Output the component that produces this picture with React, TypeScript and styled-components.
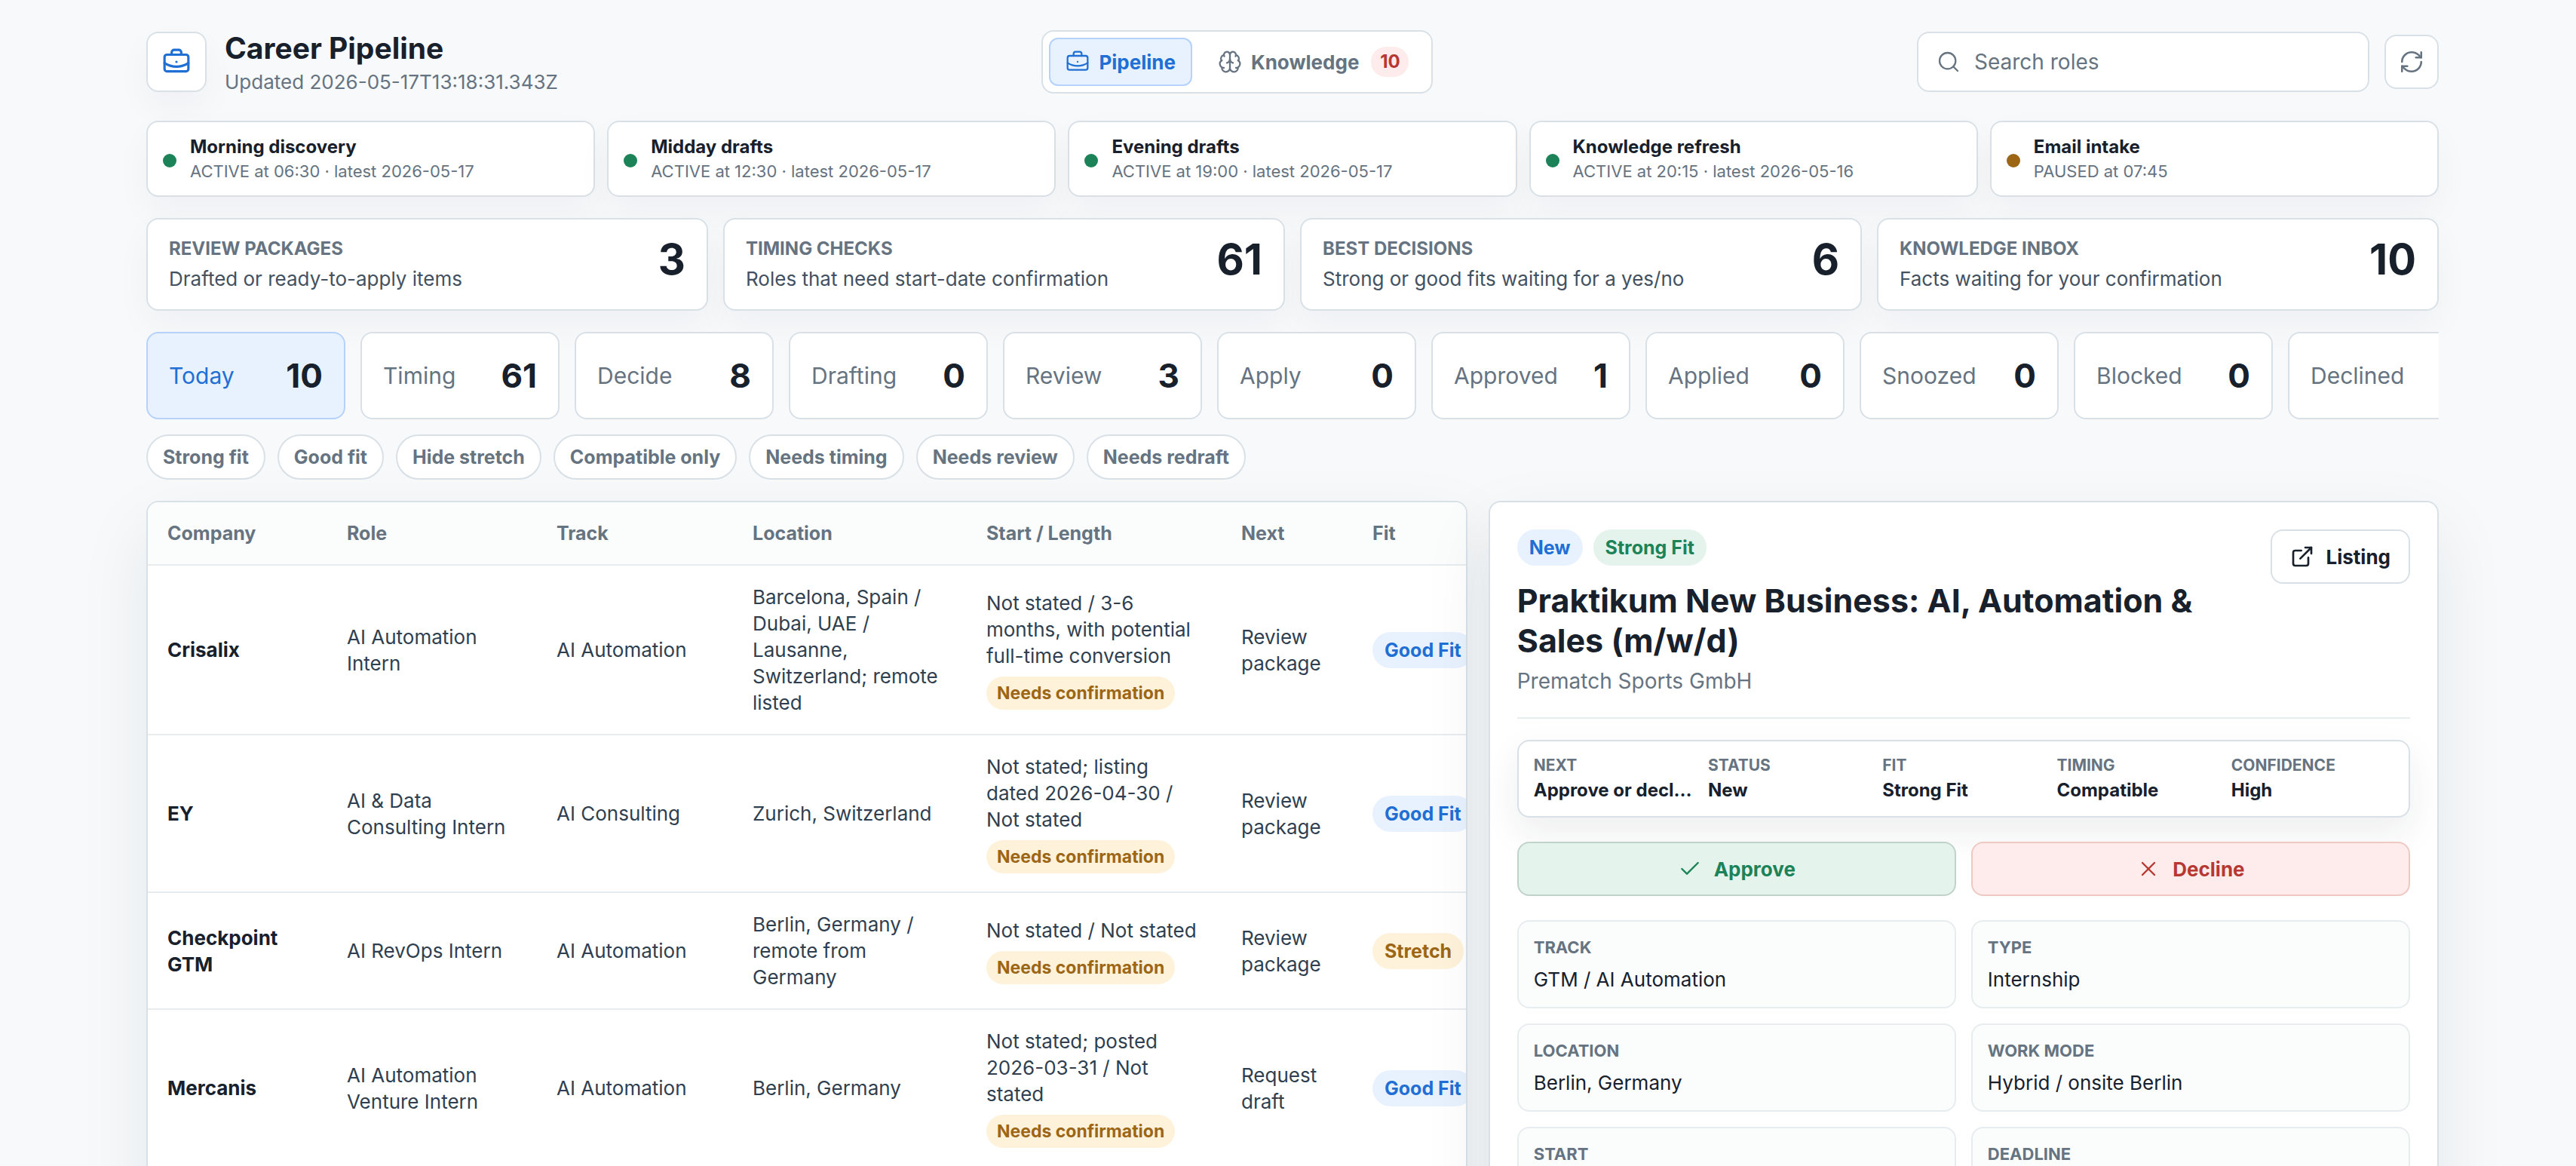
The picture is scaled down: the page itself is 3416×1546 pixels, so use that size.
import React from "react";
import styled, { createGlobalStyle, css } from "styled-components";
import {
  BriefcaseBusiness,
  Brain,
  Search,
  RefreshCw,
  ExternalLink,
  Check,
  X,
} from "lucide-react";

const color = {
  page: "#f7f9fb",
  panel: "#ffffff",
  soft: "#fbfdfd",
  line: "#d9e1e7",
  lineSoft: "#e7ecef",
  ink: "#17202b",
  body: "#2f3f4f",
  text: "#435160",
  muted: "#667380",
  blue: "#1f6fd4",
  blueBg: "#e8f2ff",
  blueLine: "#b5d2fa",
  green: "#1c8358",
  greenBg: "#e4f3eb",
  amber: "#9c6615",
  amberBg: "#fff2db",
  red: "#b73832",
  redBg: "#fdeceb",
};

const cardShadow = "0 20px 48px rgba(23, 32, 43, 0.04)";
const panelShadow = "0 36px 96px rgba(23, 32, 43, 0.08)";

type Tone = "blue" | "green" | "amber" | "red";

const tones: Record<Tone, ReturnType<typeof css>> = {
  blue: css`
    color: ${color.blue};
    background: ${color.blueBg};
  `,
  green: css`
    color: ${color.green};
    background: ${color.greenBg};
  `,
  amber: css`
    color: ${color.amber};
    background: ${color.amberBg};
  `,
  red: css`
    color: ${color.red};
    background: ${color.redBg};
  `,
};

const GlobalStyle = createGlobalStyle`
  *, *::before, *::after { box-sizing: border-box; }
  html, body { height: 100%; }
  #root { height: 100%; }
  body {
    margin: 0;
    overflow: hidden;
    background: ${color.page};
    color: ${color.ink};
    font-family: Inter, "Open Sans", sans-serif;
    font-size: 28px;
    -webkit-font-smoothing: antialiased;
  }
  h1, h2, p, dl, dd, dt { margin: 0; }
  button, input { font: inherit; color: inherit; }
  button { cursor: pointer; }
  svg { flex: none; display: block; }
`;

const Page = styled.div`
  height: 100%;
  overflow: hidden;
  padding: 40px 0 0 12px;
`;

const Shell = styled.div`
  max-width: 3040px;
  margin: 0 auto;
  display: flex;
  flex-direction: column;
  gap: 28px;
`;

const Header = styled.header`
  display: flex;
  align-items: center;
  justify-content: space-between;
  height: 84px;
  margin-bottom: 8px;
`;

const Brand = styled.div`
  display: flex;
  align-items: center;
  gap: 24px;
`;

const BrandMark = styled.div`
  display: grid;
  place-items: center;
  width: 80px;
  height: 80px;
  border: 2px solid ${color.line};
  border-radius: 16px;
  background: ${color.panel};
  color: ${color.blue};
  box-shadow: ${cardShadow};
`;

const BrandText = styled.div`
  padding-top: 4px;
`;

const BrandTitle = styled.h1`
  font-size: 39px;
  line-height: 46px;
  font-weight: 700;
`;

const BrandNote = styled.p`
  margin-top: 4px;
  font-size: 26px;
  line-height: 36px;
  color: ${color.muted};
`;

const Nav = styled.nav`
  display: flex;
  gap: 12px;
  padding: 8px;
  border: 2px solid ${color.line};
  border-radius: 16px;
  background: ${color.panel};
`;

const NavButton = styled.button<{ $active?: boolean }>`
  display: flex;
  align-items: center;
  gap: 12px;
  height: 64px;
  padding: 0 20px;
  border: 2px solid ${(p) => (p.$active ? color.blueLine : "transparent")};
  border-radius: 12px;
  background: ${(p) => (p.$active ? color.blueBg : "transparent")};
  color: ${(p) => (p.$active ? color.blue : color.muted)};
  font-size: 26px;
  font-weight: 700;
`;

const NavBadge = styled.span`
  ${tones.red}
  min-width: 50px;
  margin-left: 4px;
  padding: 0 10px;
  border-radius: 20px;
  font-size: 24px;
  line-height: 40px;
  text-align: center;
`;

const HeaderTools = styled.div`
  display: flex;
  align-items: center;
  gap: 20px;
`;

const SearchBox = styled.label`
  display: flex;
  align-items: center;
  gap: 18px;
  width: 600px;
  height: 80px;
  padding: 0 24px;
  border: 2px solid ${color.line};
  border-radius: 16px;
  background: ${color.panel};
  color: ${color.muted};
`;

const SearchInput = styled.input`
  flex: 1;
  min-width: 0;
  padding: 0;
  border: 0;
  outline: 0;
  background: transparent;
  color: ${color.ink};
  font-size: 28px;

  &::placeholder {
    color: ${color.muted};
    opacity: 1;
  }
`;

const IconButton = styled.button`
  display: grid;
  place-items: center;
  width: 72px;
  height: 72px;
  padding: 0;
  border: 2px solid ${color.line};
  border-radius: 16px;
  background: ${color.panel};
  color: ${color.muted};
`;

const Automations = styled.section`
  display: grid;
  grid-template-columns: repeat(5, minmax(0, 1fr));
  gap: 16px;
`;

const Automation = styled.article`
  display: flex;
  align-items: center;
  gap: 18px;
  padding: 16px 20px;
  border: 2px solid ${color.line};
  border-radius: 16px;
  background: ${color.panel};
  box-shadow: ${cardShadow};
`;

const StatusDot = styled.span<{ $paused: boolean }>`
  flex: none;
  width: 18px;
  height: 18px;
  margin-top: 4px;
  border-radius: 50%;
  background: ${(p) => (p.$paused ? color.amber : color.green)};
`;

const AutomationName = styled.strong`
  display: block;
  font-size: 24px;
  line-height: 33px;
  font-weight: 700;
`;

const AutomationNote = styled.span`
  display: block;
  font-size: 22px;
  line-height: 32px;
  color: ${color.muted};
`;

const Metrics = styled.section`
  display: grid;
  grid-template-columns: repeat(4, minmax(0, 1fr));
  gap: 20px;
`;

const Metric = styled.article`
  display: flex;
  justify-content: space-between;
  gap: 20px;
  padding: 22px 28px;
  border: 2px solid ${color.line};
  border-radius: 16px;
  background: ${color.panel};
  box-shadow: ${cardShadow};
`;

const MetricName = styled.h2`
  font-size: 24px;
  line-height: 34px;
  font-weight: 700;
  text-transform: uppercase;
  color: ${color.muted};
`;

const MetricNote = styled.p`
  margin-top: 4px;
  font-size: 26px;
  line-height: 37px;
  color: ${color.text};
`;

const MetricValue = styled.strong`
  font-size: 56px;
  line-height: 62px;
  font-weight: 700;
`;

const Stages = styled.div`
  display: flex;
  gap: 20px;
  overflow: hidden;
`;

const Stage = styled.button<{ $active: boolean }>`
  flex: none;
  display: flex;
  align-items: center;
  justify-content: space-between;
  width: 264px;
  height: 116px;
  padding: 0 28px;
  border: 2px solid ${(p) => (p.$active ? color.blueLine : color.line)};
  border-radius: 16px;
  background: ${(p) => (p.$active ? color.blueBg : color.panel)};
  color: ${(p) => (p.$active ? color.blue : color.muted)};
  font-size: 30px;

  strong {
    font-size: 44px;
    font-weight: 700;
    color: ${color.ink};
  }
`;

const Filters = styled.div`
  display: flex;
  gap: 16px;
  margin-top: -8px;
`;

const Chip = styled.button`
  height: 60px;
  padding: 0 20px;
  border: 2px solid ${color.line};
  border-radius: 30px;
  background: ${color.panel};
  color: ${color.muted};
  font-size: 25px;
  font-weight: 700;
`;

const Workspace = styled.main`
  display: grid;
  grid-template-columns: minmax(0, 1.39fr) minmax(0, 1fr);
  gap: 28px;
`;

const Panel = styled.section`
  border: 2px solid ${color.line};
  border-radius: 16px;
  background: ${color.panel};
  box-shadow: ${panelShadow};
`;

const TablePanel = styled(Panel)`
  overflow: hidden;
`;

const Table = styled.table`
  width: 1796px;
  table-layout: fixed;
  border-collapse: separate;
  border-spacing: 0;
`;

const HeadCell = styled.th<{ $width: number }>`
  width: ${(p) => p.$width}px;
  height: 84px;
  padding: 0 26px;
  border-bottom: 2px solid ${color.lineSoft};
  background: ${color.soft};
  color: ${color.muted};
  font-size: 25px;
  font-weight: 700;
  text-align: left;
`;

const Cell = styled.td`
  padding: 24px 26px;
  border-bottom: 2px solid ${color.lineSoft};
  color: ${color.body};
  font-size: 26px;
  line-height: 35px;
  vertical-align: middle;
`;

const CompanyCell = styled(Cell)`
  color: ${color.ink};
  font-weight: 700;
`;

const Tag = styled.span<{ $tone: Tone }>`
  ${(p) => tones[p.$tone]}
  display: inline-block;
  padding: 0 16px;
  border-radius: 24px;
  font-size: 25px;
  line-height: 48px;
  font-weight: 700;
  white-space: nowrap;
  vertical-align: middle;
`;

const TimingTag = styled.span`
  ${tones.amber}
  display: block;
  width: max-content;
  margin-top: 10px;
  padding: 0 14px;
  border-radius: 22px;
  font-size: 23px;
  line-height: 44px;
  font-weight: 700;
`;

const Detail = styled(Panel)`
  position: relative;
  padding: 36px;
`;

const DetailHead = styled.header`
  display: flex;
  align-items: flex-start;
  justify-content: space-between;
  gap: 28px;
  padding-bottom: 28px;
  border-bottom: 2px solid ${color.lineSoft};
`;

const Tags = styled.div`
  display: flex;
  gap: 14px;
`;

const DetailTitle = styled.h2`
  margin-top: 20px;
  font-size: 43px;
  line-height: 53px;
  font-weight: 700;
`;

const DetailCompany = styled.p`
  margin-top: 8px;
  font-size: 28px;
  line-height: 39px;
  color: ${color.muted};
`;

const ListingLink = styled.a`
  flex: none;
  display: flex;
  align-items: center;
  gap: 16px;
  height: 72px;
  padding: 0 24px;
  border: 2px solid ${color.line};
  border-radius: 16px;
  color: ${color.ink};
  font-size: 26px;
  font-weight: 700;
  text-decoration: none;
`;

const Summary = styled.dl`
  display: grid;
  grid-template-columns: repeat(5, minmax(0, 1fr));
  gap: 16px;
  margin-top: 28px;
  padding: 18px 20px;
  border: 2px solid ${color.line};
  border-radius: 16px;
  background: ${color.panel};
  box-shadow: 0 20px 48px rgba(23, 32, 43, 0.08);

  dt {
    font-size: 21px;
    line-height: 28px;
    font-weight: 700;
    text-transform: uppercase;
    color: ${color.muted};
  }

  dd {
    margin-top: 2px;
    overflow: hidden;
    font-size: 24px;
    line-height: 33px;
    font-weight: 700;
    text-overflow: ellipsis;
    white-space: nowrap;
  }
`;

const Decisions = styled.div`
  display: grid;
  grid-template-columns: 1fr 1fr;
  gap: 20px;
  margin-top: 32px;
`;

const Decision = styled.button<{ $tone: Tone; $line: string }>`
  ${(p) => tones[p.$tone]}
  display: flex;
  align-items: center;
  justify-content: center;
  gap: 16px;
  height: 72px;
  border: 2px solid ${(p) => p.$line};
  border-radius: 16px;
  font-size: 26px;
  font-weight: 700;
`;

const Fields = styled.dl`
  display: grid;
  grid-template-columns: 1fr 1fr;
  gap: 20px;
  margin-top: 32px;
`;

const Field = styled.div`
  padding: 18px 20px;
  border: 2px solid ${color.lineSoft};
  border-radius: 16px;
  background: ${color.soft};

  dt {
    font-size: 22px;
    line-height: 32px;
    font-weight: 700;
    text-transform: uppercase;
    color: ${color.muted};
  }

  dd {
    margin-top: 8px;
    font-size: 26px;
    line-height: 37px;
  }
`;

const automations = [
  { name: "Morning discovery", note: "ACTIVE at 06:30 · latest 2026-05-17" },
  { name: "Midday drafts", note: "ACTIVE at 12:30 · latest 2026-05-17" },
  { name: "Evening drafts", note: "ACTIVE at 19:00 · latest 2026-05-17" },
  { name: "Knowledge refresh", note: "ACTIVE at 20:15 · latest 2026-05-16" },
  { name: "Email intake", note: "PAUSED at 07:45", paused: true },
];

const metrics = [
  { name: "Review packages", note: "Drafted or ready-to-apply items", value: 3 },
  { name: "Timing checks", note: "Roles that need start-date confirmation", value: 61 },
  { name: "Best decisions", note: "Strong or good fits waiting for a yes/no", value: 6 },
  { name: "Knowledge inbox", note: "Facts waiting for your confirmation", value: 10 },
];

const stages: [string, number][] = [
  ["Today", 10],
  ["Timing", 61],
  ["Decide", 8],
  ["Drafting", 0],
  ["Review", 3],
  ["Apply", 0],
  ["Approved", 1],
  ["Applied", 0],
  ["Snoozed", 0],
  ["Blocked", 0],
  ["Declined", 0],
];

const filters = [
  "Strong fit",
  "Good fit",
  "Hide stretch",
  "Compatible only",
  "Needs timing",
  "Needs review",
  "Needs redraft",
];

const columns: [string, number][] = [
  ["Company", 238],
  ["Role", 278],
  ["Track", 260],
  ["Location", 310],
  ["Start / Length", 338],
  ["Next", 174],
  ["Fit", 198],
];

const roles: {
  company: string;
  role: string;
  track: string;
  location: string;
  start: string;
  next: string;
  fit: string;
  tone: Tone;
}[] = [
  {
    company: "Crisalix",
    role: "AI Automation Intern",
    track: "AI Automation",
    location: "Barcelona, Spain / Dubai, UAE / Lausanne, Switzerland; remote listed",
    start: "Not stated / 3-6 months, with potential full-time conversion",
    next: "Review package",
    fit: "Good Fit",
    tone: "blue",
  },
  {
    company: "EY",
    role: "AI & Data Consulting Intern",
    track: "AI Consulting",
    location: "Zurich, Switzerland",
    start: "Not stated; listing dated 2026-04-30 / Not stated",
    next: "Review package",
    fit: "Good Fit",
    tone: "blue",
  },
  {
    company: "Checkpoint GTM",
    role: "AI RevOps Intern",
    track: "AI Automation",
    location: "Berlin, Germany / remote from Germany",
    start: "Not stated / Not stated",
    next: "Review package",
    fit: "Stretch",
    tone: "amber",
  },
  {
    company: "Mercanis",
    role: "AI Automation Venture Intern",
    track: "AI Automation",
    location: "Berlin, Germany",
    start: "Not stated; posted 2026-03-31 / Not stated",
    next: "Request draft",
    fit: "Good Fit",
    tone: "blue",
  },
];

const summary = [
  ["Next", "Approve or decline"],
  ["Status", "New"],
  ["Fit", "Strong Fit"],
  ["Timing", "Compatible"],
  ["Confidence", "High"],
];

const fields = [
  ["Track", "GTM / AI Automation"],
  ["Type", "Internship"],
  ["Location", "Berlin, Germany"],
  ["Work mode", "Hybrid / onsite Berlin"],
  ["Start", "Not stated"],
  ["Deadline", "Not stated"],
];

export default function App() {
  return (
    <Page>
      <GlobalStyle />
      <Shell>
        <Header>
          <Brand>
            <BrandMark>
              <BriefcaseBusiness size={38} />
            </BrandMark>
            <BrandText>
              <BrandTitle>Career Pipeline</BrandTitle>
              <BrandNote>Updated 2026-05-17T13:18:31.343Z</BrandNote>
            </BrandText>
          </Brand>
          <Nav aria-label="Views">
            <NavButton type="button" $active>
              <BriefcaseBusiness size={32} strokeWidth={1.7} />
              Pipeline
            </NavButton>
            <NavButton type="button">
              <Brain size={32} strokeWidth={1.7} />
              Knowledge
              <NavBadge>10</NavBadge>
            </NavButton>
          </Nav>
          <HeaderTools>
            <SearchBox>
              <Search size={32} strokeWidth={1.7} />
              <SearchInput type="search" placeholder="Search roles" aria-label="Search roles" />
            </SearchBox>
            <IconButton type="button" aria-label="Refresh">
              <RefreshCw size={34} strokeWidth={1.8} />
            </IconButton>
          </HeaderTools>
        </Header>

        <Automations aria-label="Automations">
          {automations.map((a) => (
            <Automation key={a.name}>
              <StatusDot $paused={Boolean(a.paused)} />
              <div>
                <AutomationName>{a.name}</AutomationName>
                <AutomationNote>{a.note}</AutomationNote>
              </div>
            </Automation>
          ))}
        </Automations>

        <Metrics aria-label="Summary">
          {metrics.map((m) => (
            <Metric key={m.name}>
              <div>
                <MetricName>{m.name}</MetricName>
                <MetricNote>{m.note}</MetricNote>
              </div>
              <MetricValue>{m.value}</MetricValue>
            </Metric>
          ))}
        </Metrics>

        <Stages>
          {stages.map(([name, count], i) => (
            <Stage key={name} type="button" $active={i === 0}>
              {name}
              <strong>{count}</strong>
            </Stage>
          ))}
        </Stages>

        <Filters>
          {filters.map((f) => (
            <Chip key={f} type="button">
              {f}
            </Chip>
          ))}
        </Filters>

        <Workspace>
          <TablePanel>
            <Table>
              <thead>
                <tr>
                  {columns.map(([name, width]) => (
                    <HeadCell key={name} scope="col" $width={width}>
                      {name}
                    </HeadCell>
                  ))}
                </tr>
              </thead>
              <tbody>
                {roles.map((r) => (
                  <tr key={r.company}>
                    <CompanyCell>{r.company}</CompanyCell>
                    <Cell>{r.role}</Cell>
                    <Cell>{r.track}</Cell>
                    <Cell>{r.location}</Cell>
                    <Cell>
                      {r.start}
                      <TimingTag>Needs confirmation</TimingTag>
                    </Cell>
                    <Cell>{r.next}</Cell>
                    <Cell>
                      <Tag $tone={r.tone}>{r.fit}</Tag>
                    </Cell>
                  </tr>
                ))}
              </tbody>
            </Table>
          </TablePanel>

          <Detail>
            <DetailHead>
              <div>
                <Tags>
                  <Tag $tone="blue">New</Tag>
                  <Tag $tone="green">Strong Fit</Tag>
                </Tags>
                <DetailTitle>Praktikum New Business: AI, Automation &amp; Sales (m/w/d)</DetailTitle>
                <DetailCompany>Prematch Sports GmbH</DetailCompany>
              </div>
              <ListingLink href="#listing">
                <ExternalLink size={32} strokeWidth={2} />
                Listing
              </ListingLink>
            </DetailHead>

            <Summary>
              {summary.map(([label, value]) => (
                <div key={label}>
                  <dt>{label}</dt>
                  <dd>{value}</dd>
                </div>
              ))}
            </Summary>

            <Decisions>
              <Decision type="button" $tone="green" $line="#c0d3ca">
                <Check size={32} strokeWidth={1.8} />
                Approve
              </Decision>
              <Decision type="button" $tone="red" $line="#efc8c2">
                <X size={32} strokeWidth={1.8} />
                Decline
              </Decision>
            </Decisions>

            <Fields>
              {fields.map(([label, value]) => (
                <Field key={label}>
                  <dt>{label}</dt>
                  <dd>{value}</dd>
                </Field>
              ))}
            </Fields>
          </Detail>
        </Workspace>
      </Shell>
    </Page>
  );
}
